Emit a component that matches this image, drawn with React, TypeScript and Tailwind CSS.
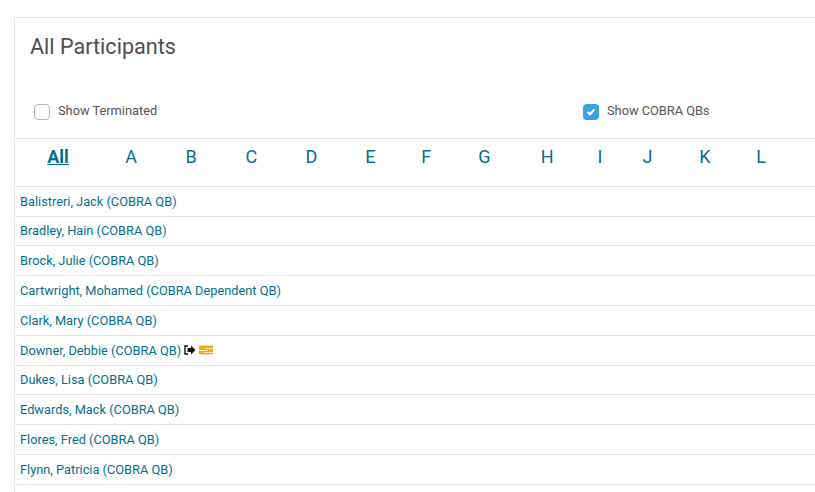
import React from "react";

const letters: [string, string][] = [
  ["All", "w-[86px]"],
  ["A", "w-[60px]"],
  ["B", "w-[60px]"],
  ["C", "w-[60.5px]"],
  ["D", "w-[60px]"],
  ["E", "w-[57.5px]"],
  ["F", "w-[54.5px]"],
  ["G", "w-[62px]"],
  ["H", "w-[63.5px]"],
  ["I", "w-[42px]"],
  ["J", "w-[53px]"],
  ["K", "w-[62px]"],
  ["L", "w-[50px]"],
];

const rows = [
  "Balistreri, Jack (COBRA QB)",
  "Bradley, Hain (COBRA QB)",
  "Brock, Julie (COBRA QB)",
  "Cartwright, Mohamed (COBRA Dependent QB)",
  "Clark, Mary (COBRA QB)",
  "Downer, Debbie (COBRA QB)",
  "Dukes, Lisa (COBRA QB)",
  "Edwards, Mack (COBRA QB)",
  "Flores, Fred (COBRA QB)",
  "Flynn, Patricia (COBRA QB)",
];

function Icons() {
  return (
    <span className="inline-flex items-center gap-[3px] ml-[3px]">
      <svg width="12" height="10" viewBox="0 0 12 10">
        <path d="M4 1H1v8h3" fill="none" stroke="#111" strokeWidth="1.4" />
        <path d="M3.5 3H7V0.5L11.5 5 7 9.5V7H3.5z" fill="#111" />
      </svg>
      <svg width="14" height="10" viewBox="0 0 14 10">
        <rect width="14" height="10" fill="#fdd9a0" />
        <rect y="1" width="14" height="8" fill="#fda514" />
        <rect x="6" y="3" width="8" height="1" fill="#ffe7b0" />
        <rect x="0" y="5" width="9" height="1" fill="#ffe7b0" />
        <rect x="5" y="7" width="9" height="1" fill="#ffe7b0" />
      </svg>
    </span>
  );
}

export default function App() {
  return (
    <div className="w-[815px] h-[492px] overflow-hidden bg-white pt-[17px] pl-[14px] font-['Roboto',sans-serif]">
      <div className="border-l border-t border-[#e7e7e7] h-[600px]">
        <h1 className="h-[78px] pl-[15px] pt-[14px] text-[21.6px] leading-[30px] font-normal text-[#4f4f4f]">
          All Participants
        </h1>
        <div className="flex h-[43px] items-start pl-[19px] pt-[8px] text-[12.8px] leading-[16px] text-[#555] border-b border-[#e2e2e2]">
          <label className="flex w-[549px] shrink-0 gap-[8px]">
            <span className="w-4 h-4 rounded-[4px] border border-[#b5b5b5] bg-white" />
            <span className="-mt-[1px]">Show Terminated</span>
          </label>
          <label className="flex gap-[8px]">
            <span className="w-4 h-4 rounded-[4px] bg-[#36a3e0] flex items-center justify-center">
              <svg width="10" height="8" viewBox="0 0 10 8">
                <path d="M1.5 4l2.3 2.3L8.5 1.5" fill="none" stroke="#fff" strokeWidth="2" />
              </svg>
            </span>
            <span className="-mt-[1px]">Show COBRA QBs</span>
          </label>
        </div>
        <div className="flex h-[47.8px] items-center border-b border-[#e2e2e2] pb-[10px]">
          {letters.map(([l, w]) => (
            <a
              key={l}
              className={`${w} shrink-0 text-center text-[18px] leading-[24px] text-[#00708c] ${
                l === "All" ? "font-bold underline" : ""
              }`}
            >
              {l}
            </a>
          ))}
        </div>
        {rows.map((r) => (
          <div
            key={r}
            className="flex h-[29.8px] items-center border-b border-[#e2e2e2] pl-[5px] text-[12.8px] text-[#00708c]"
          >
            <a>{r}</a>
            {r.startsWith("Downer") && <Icons />}
          </div>
        ))}
      </div>
    </div>
  );
}
